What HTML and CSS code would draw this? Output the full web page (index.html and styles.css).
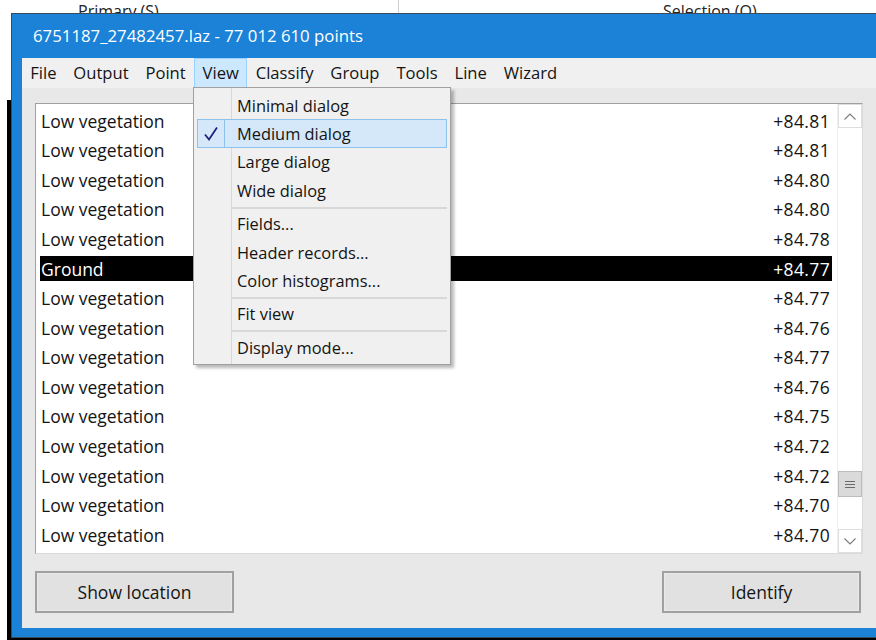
FILE: index.html
```html
<!DOCTYPE html>
<html lang="en">
<head>
<meta charset="utf-8">
<title>Point list</title>
<link rel="stylesheet" href="styles.css">
</head>
<body>
<div class="desk">
  <div class="backdrop">
    <div class="back-left"></div>
    <div class="back-tab tab-primary"><span>Primary (S)</span></div>
    <div class="back-tab tab-selection"><span>Selection (Q)</span></div>
  </div>
  <div class="back-shade"></div>

  <div class="window">
    <div class="titlebar">6751187_27482457.laz - 77 012 610 points</div>
    <div class="client">
      <nav class="menubar">
        <span class="menu-item">File</span>
        <span class="menu-item">Output</span>
        <span class="menu-item">Point</span>
        <span class="menu-item open">View</span>
        <span class="menu-item">Classify</span>
        <span class="menu-item">Group</span>
        <span class="menu-item">Tools</span>
        <span class="menu-item">Line</span>
        <span class="menu-item">Wizard</span>
      </nav>
      <div class="body">
        <div class="listbox">
          <div class="rows">
            <div class="row"><span class="cell"><span>Low vegetation</span><span class="num">+84.81</span></span></div>
            <div class="row"><span class="cell"><span>Low vegetation</span><span class="num">+84.81</span></span></div>
            <div class="row"><span class="cell"><span>Low vegetation</span><span class="num">+84.80</span></span></div>
            <div class="row"><span class="cell"><span>Low vegetation</span><span class="num">+84.80</span></span></div>
            <div class="row"><span class="cell"><span>Low vegetation</span><span class="num">+84.78</span></span></div>
            <div class="row selected"><span class="cell"><span>Ground</span><span class="num">+84.77</span></span></div>
            <div class="row"><span class="cell"><span>Low vegetation</span><span class="num">+84.77</span></span></div>
            <div class="row"><span class="cell"><span>Low vegetation</span><span class="num">+84.76</span></span></div>
            <div class="row"><span class="cell"><span>Low vegetation</span><span class="num">+84.77</span></span></div>
            <div class="row"><span class="cell"><span>Low vegetation</span><span class="num">+84.76</span></span></div>
            <div class="row"><span class="cell"><span>Low vegetation</span><span class="num">+84.75</span></span></div>
            <div class="row"><span class="cell"><span>Low vegetation</span><span class="num">+84.72</span></span></div>
            <div class="row"><span class="cell"><span>Low vegetation</span><span class="num">+84.72</span></span></div>
            <div class="row"><span class="cell"><span>Low vegetation</span><span class="num">+84.70</span></span></div>
            <div class="row"><span class="cell"><span>Low vegetation</span><span class="num">+84.70</span></span></div>
          </div>
          <div class="scrollbar">
            <div class="sb-btn">
              <svg width="12" height="7" viewBox="0 0 12 7"><path d="M0.5 6.5 L6 1 L11.5 6.5" fill="none" stroke="#7a7a7a" stroke-width="1.1"/></svg>
            </div>
            <div class="sb-track">
              <div class="sb-thumb">
                <svg width="10" height="9" viewBox="0 0 10 9"><path d="M0 1.5H10M0 4.5H10M0 7.5H10" stroke="#6a6a6a" stroke-width="1.2"/></svg>
              </div>
            </div>
            <div class="sb-btn">
              <svg width="12" height="7" viewBox="0 0 12 7"><path d="M0.5 0.5 L6 6 L11.5 0.5" fill="none" stroke="#7a7a7a" stroke-width="1.1"/></svg>
            </div>
          </div>
        </div>
        <div class="buttons">
          <button class="btn">Show location</button>
          <button class="btn">Identify</button>
        </div>
      </div>
    </div>
  </div>

  <div class="dropdown">
    <div class="dd-item"><span class="dd-check"></span><span class="dd-label">Minimal dialog</span></div>
    <div class="dd-item checked"><span class="dd-check"><svg width="16" height="16" viewBox="0 0 16 16"><path d="M2 8.5 L6 13.5 L14 1.5" fill="none" stroke="#202080" stroke-width="1.8"/></svg></span><span class="dd-label">Medium dialog</span></div>
    <div class="dd-item"><span class="dd-check"></span><span class="dd-label">Large dialog</span></div>
    <div class="dd-item"><span class="dd-check"></span><span class="dd-label">Wide dialog</span></div>
    <div class="dd-sep"></div>
    <div class="dd-item"><span class="dd-check"></span><span class="dd-label">Fields...</span></div>
    <div class="dd-item"><span class="dd-check"></span><span class="dd-label">Header records...</span></div>
    <div class="dd-item"><span class="dd-check"></span><span class="dd-label">Color histograms...</span></div>
    <div class="dd-sep"></div>
    <div class="dd-item"><span class="dd-check"></span><span class="dd-label">Fit view</span></div>
    <div class="dd-sep"></div>
    <div class="dd-item"><span class="dd-check"></span><span class="dd-label">Display mode...</span></div>
  </div>
</div>
</body>
</html>
```

FILE: styles.css
```css
* { box-sizing: border-box; }

html, body {
  margin: 0;
  padding: 0;
  background: #ffffff;
  overflow: hidden;
}

body {
  font-family: "Open Sans", "Noto Sans", sans-serif;
  font-size: 16px;
  color: #141414;
}

.desk {
  position: relative;
  width: 876px;
  height: 640px;
  overflow: hidden;
}

/* windows lying behind the dialog */
.backdrop {
  height: 13px;
  display: flex;
  overflow: hidden;
  position: relative;
}

.back-left {
  position: absolute;
  left: 0;
  top: 18px;
  width: 11px;
  height: 5px;
  background: #a9a9a9;
}

.back-tab {
  height: 13px;
  display: flex;
  align-items: flex-end;
  overflow: hidden;
  color: #222;
}

.back-tab span {
  line-height: 16px;
  margin-bottom: -6px;
}

.tab-primary {
  width: 399px;
  padding-left: 78px;
  border-right: 1px solid #cfcfcf;
}

.tab-selection {
  padding-left: 264px;
}

.back-shade {
  position: absolute;
  left: 7px;
  top: 100px;
  width: 880px;
  height: 560px;
  background: #000;
}

/* the dialog window */
.window {
  position: absolute;
  left: 11px;
  top: 13px;
  width: 890px;
  height: 625px;
  border: 1px solid #3a4a5a;
  border-right: none;
  background: #1b82d7;
  padding: 0 0 9px 10px;
  display: flex;
  flex-direction: column;
}

.titlebar {
  height: 44px;
  color: #ffffff;
  line-height: 44px;
  padding-left: 11px;
  font-size: 16.8px;
  white-space: nowrap;
}

.client {
  flex: 1;
  background: #e8e8e8;
  display: flex;
  flex-direction: column;
  width: 854px;
}

.menubar {
  height: 30px;
  background: #f0f0f0;
  display: flex;
  align-items: stretch;
  padding-left: 0;
  gap: 0.5px;
  font-size: 16.6px;
}

.menu-item {
  padding: 0 7.2px;
  line-height: 28px;
  border: 1px solid transparent;
  white-space: nowrap;
}

.menu-item.open {
  background: #cce8ff;
  border-color: #99d1ff;
}

.body {
  flex: 1;
  display: flex;
  flex-direction: column;
  padding: 15px 13px 0 13px;
}

/* point list */
.listbox {
  height: 451px;
  border: 1px solid #a0a0a0;
  border-right-color: #dadada;
  border-bottom-color: #dadada;
  background: #ffffff;
  display: flex;
  font-size: 17.5px;
}

.rows {
  flex: 1;
  padding: 2px 5px 0 4px;
}

.row {
  height: 29.57px;
  display: flex;
  align-items: center;
}

.cell {
  flex: 1;
  height: 25px;
  display: flex;
  justify-content: space-between;
  align-items: center;
  padding: 0 2px 0 1px;
  white-space: nowrap;
}

.num {
  letter-spacing: 0.35px;
}

.row.selected .cell {
  background: #000000;
  color: #ffffff;
}

.scrollbar {
  width: 25px;
  display: flex;
  flex-direction: column;
  border-left: 1px solid #f0f0f0;
}

.sb-btn {
  height: 24px;
  border: 1px solid #dedede;
  display: flex;
  align-items: center;
  justify-content: center;
  background: #ffffff;
}

.sb-track {
  flex: 1;
  background: #ffffff;
  display: flex;
  flex-direction: column;
  justify-content: flex-end;
  padding-bottom: 32px;
}

.sb-thumb {
  height: 26px;
  background: #dadada;
  border: 1px solid #bcbcbc;
  display: flex;
  align-items: center;
  justify-content: center;
}

/* bottom buttons */
.buttons {
  display: flex;
  justify-content: space-between;
  margin-top: 17px;
  margin-right: 2px;
}

.btn {
  width: 199px;
  height: 42px;
  font: inherit;
  font-size: 17.5px;
  color: #141414;
  background: #e1e1e1;
  border: 2px solid #a0a0a0;
  box-shadow: inset 0 0 0 1px #e9e9e9;
  padding: 0;
}

/* View menu */
.dropdown {
  position: absolute;
  left: 193px;
  top: 87px;
  width: 258px;
  background: #f0f0f0;
  border: 1px solid #a0a0a0;
  box-shadow: 3px 3px 3px rgba(0, 0, 0, 0.28);
  padding: 3px 3px 2px 3px;
  background-image: linear-gradient(#d8d8d8, #d8d8d8);
  background-size: 1px 100%;
  background-position: 37px 0;
  background-repeat: no-repeat;
  font-size: 16.4px;
}

.dd-item {
  height: 28.4px;
  display: flex;
  align-items: center;
  border: 1px solid transparent;
  white-space: nowrap;
}

.dd-check {
  width: 27px;
  height: 100%;
  display: flex;
  align-items: center;
  justify-content: center;
}

.dd-label {
  padding-left: 12px;
}

.dd-item.checked {
  background: #d5e8fa;
  border-color: #8cc2ee;
}

.dd-item.checked .dd-check {
  border-right: 1px solid #8cc2ee;
}

.dd-sep {
  height: 5px;
  margin-left: 35px;
  border-top: 2px solid #d8d8d8;
  margin-top: 2px;
  margin-bottom: -2px;
}
```
